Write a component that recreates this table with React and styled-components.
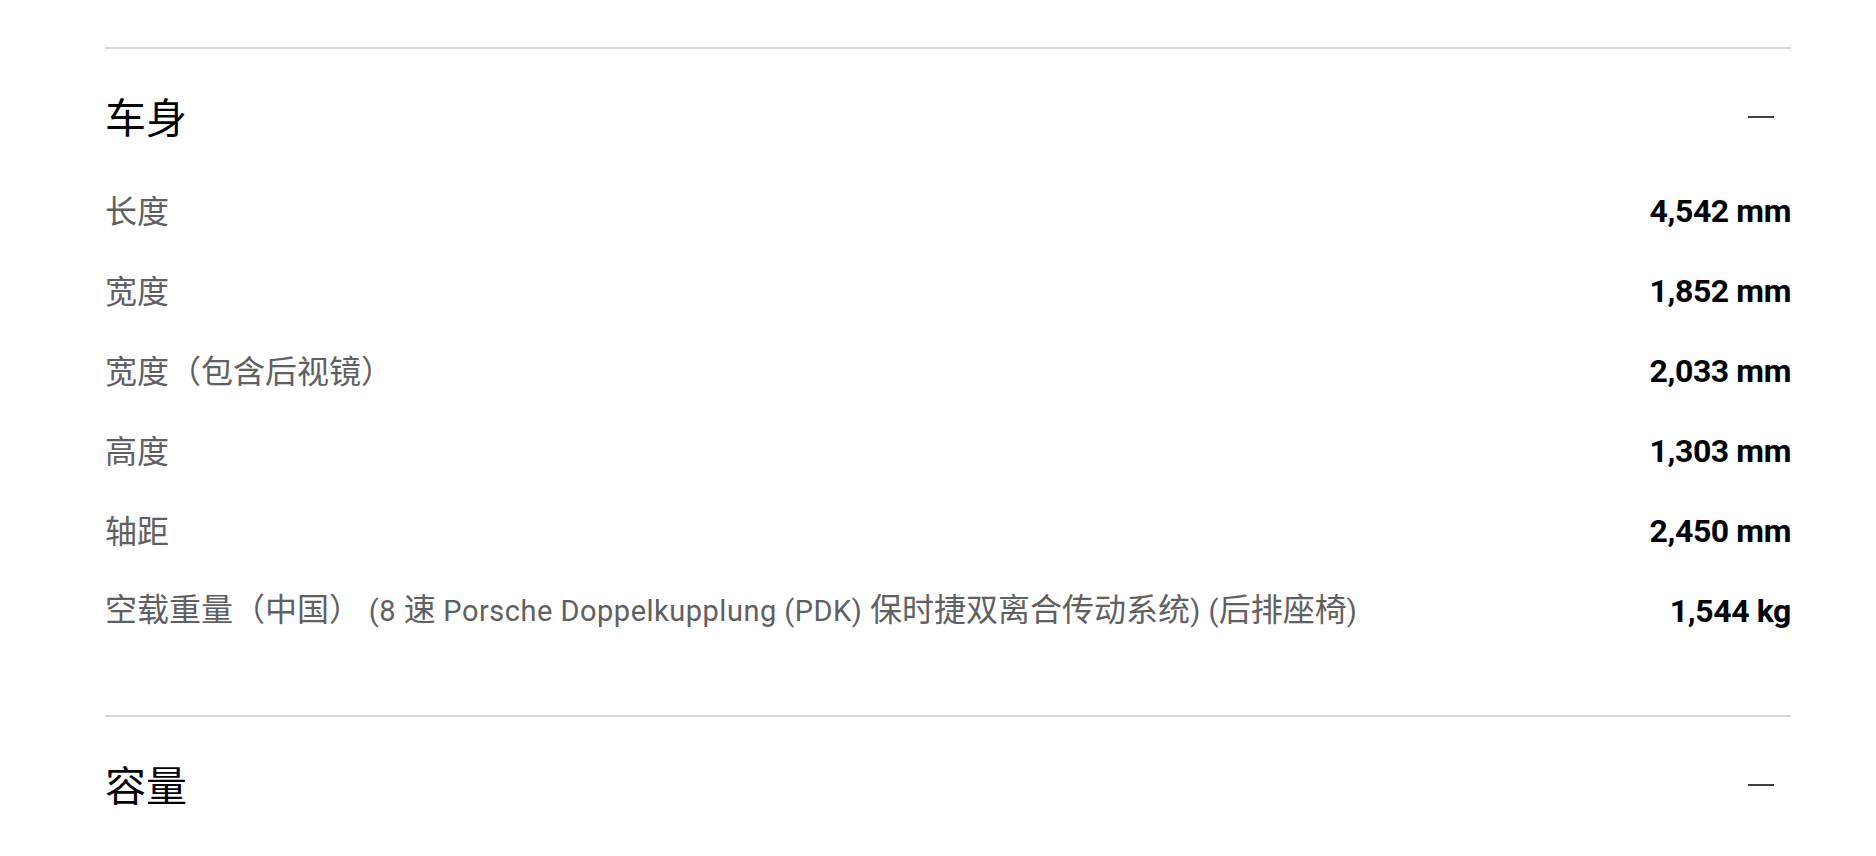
import React, { useState } from "react";
import styled, { createGlobalStyle } from "styled-components";

const sections = [
    {
        title: "车身",
        rows: [
            { label: "长度", value: "4,542 mm" },
            { label: "宽度", value: "1,852 mm" },
            { label: "宽度（包含后视镜）", value: "2,033 mm" },
            { label: "高度", value: "1,303 mm" },
            { label: "轴距", value: "2,450 mm" },
            {
                label: "空载重量（中国） (8 速 Porsche Doppelkupplung (PDK) 保时捷双离合传动系统) (后排座椅)",
                value: "1,544 kg",
            },
        ],
    },
    { title: "容量", rows: [] },
];

// latin runs get their own size, the chinese text is set larger
const splitLabel = (text) =>
    text.split(/([\x20-\x7E]+)/).filter(Boolean).map((part, i) =>
        /^[\x20-\x7E]+$/.test(part) ? <Latin key={i}>{part}</Latin> : <span key={i}>{part}</span>
    );

function App() {
    const [open, setOpen] = useState({ 0: true, 1: true });

    return (
        <Page>
            <GlobalStyle />
            {sections.map((section, i) => (
                <Section key={section.title}>
                    <Header>
                        <Title>{section.title}</Title>
                        <Toggle
                            aria-label="toggle"
                            onClick={() => setOpen({ ...open, [i]: !open[i] })}
                        >
                            <svg width="26" height="4" viewBox="0 0 26 4">
                                <line x1="0" y1="2" x2="26" y2="2" stroke="#010205" strokeWidth="1.5" />
                            </svg>
                        </Toggle>
                    </Header>
                    {open[i] && section.rows.length > 0 && (
                        <List>
                            {section.rows.map((row) => (
                                <Row key={row.label}>
                                    <Label>{splitLabel(row.label)}</Label>
                                    <Value>{row.value}</Value>
                                </Row>
                            ))}
                        </List>
                    )}
                </Section>
            ))}
        </Page>
    );
}

const GlobalStyle = createGlobalStyle`
    body {
        margin: 0;
        background: #fff;
        font-family: Roboto, "Noto Sans CJK SC", sans-serif;
    }
`;

const Page = styled.div`
    padding: 47px 85px 0 105px;
`;

const Section = styled.section`
    border-top: 2px solid #d8d8d8;
`;

const Header = styled.div`
    display: flex;
    align-items: center;
    justify-content: space-between;
    padding: 44px 0 34px;
`;

const Title = styled.h2`
    margin: 0;
    font-family: "Noto Sans CJK SC", sans-serif;
    font-size: 41px;
    font-weight: 400;
    line-height: 44px;
    color: #010205;
`;

const Toggle = styled.button`
    box-sizing: border-box;
    display: flex;
    align-items: center;
    justify-content: center;
    width: 60px;
    height: 44px;
    padding: 4px 0 0;
    border: 0;
    background: none;
    cursor: pointer;
`;

const List = styled.div`
    display: flex;
    flex-direction: column;
    padding-bottom: 64px;
`;

const Row = styled.div`
    display: flex;
    align-items: center;
    justify-content: space-between;
    height: 80px;
`;

const Label = styled.span`
    padding-bottom: 5px;
    font-family: "Noto Sans CJK SC", sans-serif;
    font-size: 32px;
    line-height: 40px;
    color: #5f6062;
`;

const Latin = styled.span`
    font-family: Roboto, sans-serif;
    font-size: 29px;
    letter-spacing: 0.5px;
`;

const Value = styled.span`
    font-family: Roboto, sans-serif;
    font-size: 32px;
    font-weight: 700;
    letter-spacing: -0.4px;
    color: #010205;
`;

export default App;
